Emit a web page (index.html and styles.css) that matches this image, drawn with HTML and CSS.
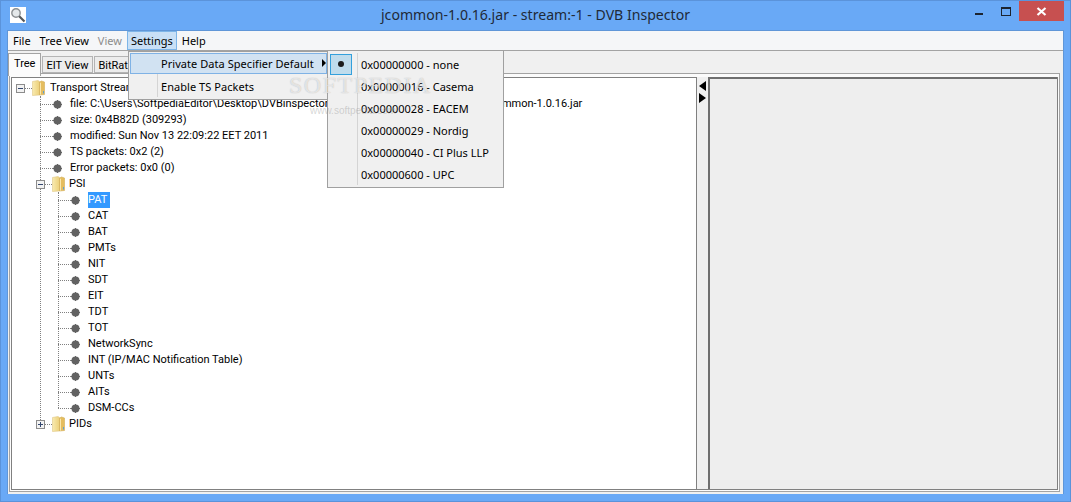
FILE: index.html
```html
<!DOCTYPE html>
<html lang="en">
<head>
<meta charset="utf-8">
<title>jcommon-1.0.16.jar - stream:-1 - DVB Inspector</title>
<link rel="stylesheet" href="styles.css">
</head>
<body>
<svg class="defs" width="0" height="0" aria-hidden="true">
  <defs>
    <linearGradient id="fg" x1="0" y1="0" x2="1" y2="0">
      <stop offset="0" stop-color="#f8eab0"/>
      <stop offset="1" stop-color="#ecd07a"/>
    </linearGradient>
    <symbol id="folder" viewBox="0 0 13 16">
      <path d="M.5 1.5 L6 .5 L7.5 1.5 L7.5 15 L.5 15.5 Z" fill="url(#fg)" stroke="#e0c886" stroke-width=".6"/>
      <path d="M7.5 2 L9.5 1 L12.5 2 L12.5 14.5 L7.5 15 Z" fill="#e5bd5e" stroke="#d2ac55" stroke-width=".6"/>
      <path d="M8.2 3 L9 2.5 L9 14.5 L8.2 14.7 Z" fill="#fff3c4"/>
      <path d="M11 11 h1 v2.5 h-1 z" fill="#5f9fd0"/>
    </symbol>
    <symbol id="bullet" viewBox="0 0 9 9">
      <circle cx="4.5" cy="4.5" r="4" fill="#626262"/>
      <path d="M4.5 0v9M0 4.5h9" stroke="#626262" stroke-width="1"/>
    </symbol>
  </defs>
</svg>
<div class="window">
  <header class="titlebar">
    <div class="title-left">
      <svg class="app-icon" width="16" height="16" viewBox="0 0 16 16">
        <rect width="16" height="16" fill="#fff"/>
        <circle cx="6" cy="6" r="4.2" fill="#e4e8ea" stroke="#8b8f92" stroke-width="1.4"/>
        <path d="M9.2 9.2 L14.5 14.5" stroke="#55585a" stroke-width="2.2"/>
      </svg>
    </div>
    <div class="title-text">jcommon-1.0.16.jar - stream:-1 - DVB Inspector</div>
    <div class="controls">
      <span class="ctl-min"></span>
      <span class="ctl-max"></span>
      <span class="ctl-close">
        <svg width="11" height="9" viewBox="0 0 11 9"><path d="M1.5 1 L9.5 8 M9.5 1 L1.5 8" stroke="#fff" stroke-width="2.2"/></svg>
      </span>
    </div>
  </header>

  <div class="client">
    <nav class="menubar">
      <span class="menu-item">File</span>
      <span class="menu-item">Tree View</span>
      <span class="menu-item disabled">View</span>
      <span class="menu-item open">Settings</span>
      <span class="menu-item">Help</span>
    </nav>

    <div class="tabstrip">
      <span class="tab active">Tree</span>
      <span class="tab">EIT View</span>
      <span class="tab">BitRate View</span>
    </div>

    <section class="tabpane">
      <div class="split">
        <div class="tree">
          <div class="row root">
            <span class="box minus"></span><span class="stub"></span>
            <svg class="folder"><use href="#folder"/></svg>
            <span class="label">Transport Stream</span>
          </div>
          <ul class="branch">
            <li class="row"><span class="elbow"></span><svg class="bullet"><use href="#bullet"/></svg><span class="label">file: C:\Users\SoftpediaEditor\Desktop\DVBinspector-10\DVBinspector\lib\jfreechart\jcommon-1.0.16.jar</span></li>
            <li class="row"><span class="elbow"></span><svg class="bullet"><use href="#bullet"/></svg><span class="label">size: 0x4B82D (309293)</span></li>
            <li class="row"><span class="elbow"></span><svg class="bullet"><use href="#bullet"/></svg><span class="label">modified: Sun Nov 13 22:09:22 EET 2011</span></li>
            <li class="row"><span class="elbow"></span><svg class="bullet"><use href="#bullet"/></svg><span class="label">TS packets: 0x2 (2)</span></li>
            <li class="row"><span class="elbow"></span><svg class="bullet"><use href="#bullet"/></svg><span class="label">Error packets: 0x0 (0)</span></li>
            <li>
              <div class="row node"><span class="box minus"></span><span class="stub"></span><svg class="folder"><use href="#folder"/></svg><span class="label">PSI</span></div>
              <ul class="branch inner">
                <li class="row"><span class="elbow"></span><svg class="bullet"><use href="#bullet"/></svg><span class="label selected">PAT</span></li>
                <li class="row"><span class="elbow"></span><svg class="bullet"><use href="#bullet"/></svg><span class="label">CAT</span></li>
                <li class="row"><span class="elbow"></span><svg class="bullet"><use href="#bullet"/></svg><span class="label">BAT</span></li>
                <li class="row"><span class="elbow"></span><svg class="bullet"><use href="#bullet"/></svg><span class="label">PMTs</span></li>
                <li class="row"><span class="elbow"></span><svg class="bullet"><use href="#bullet"/></svg><span class="label">NIT</span></li>
                <li class="row"><span class="elbow"></span><svg class="bullet"><use href="#bullet"/></svg><span class="label">SDT</span></li>
                <li class="row"><span class="elbow"></span><svg class="bullet"><use href="#bullet"/></svg><span class="label">EIT</span></li>
                <li class="row"><span class="elbow"></span><svg class="bullet"><use href="#bullet"/></svg><span class="label">TDT</span></li>
                <li class="row"><span class="elbow"></span><svg class="bullet"><use href="#bullet"/></svg><span class="label">TOT</span></li>
                <li class="row"><span class="elbow"></span><svg class="bullet"><use href="#bullet"/></svg><span class="label">NetworkSync</span></li>
                <li class="row"><span class="elbow"></span><svg class="bullet"><use href="#bullet"/></svg><span class="label">INT (IP/MAC Notification Table)</span></li>
                <li class="row"><span class="elbow"></span><svg class="bullet"><use href="#bullet"/></svg><span class="label">UNTs</span></li>
                <li class="row"><span class="elbow"></span><svg class="bullet"><use href="#bullet"/></svg><span class="label">AITs</span></li>
                <li class="row"><span class="elbow"></span><svg class="bullet"><use href="#bullet"/></svg><span class="label">DSM-CCs</span></li>
              </ul>
            </li>
            <li class="row node"><span class="box plus"></span><span class="stub"></span><svg class="folder"><use href="#folder"/></svg><span class="label">PIDs</span></li>
          </ul>
        </div>
        <div class="divider">
          <span class="arrow-left"></span>
          <span class="arrow-right"></span>
        </div>
        <div class="detail"></div>
      </div>
    </section>

    <div class="popup settings-menu">
      <div class="popup-item hover"><span class="popup-text">Private Data Specifier Default</span><span class="submenu-arrow"></span></div>
      <div class="popup-item"><span class="popup-text">Enable TS Packets</span></div>
    </div>

    <div class="watermark">
      <div class="wm-big">SOFTPEDIA</div>
      <div class="wm-small">www.softpedia.com</div>
    </div>

    <div class="popup specifier-menu">
      <div class="radio-item"><span class="check"><span class="dot"></span></span><span>0x00000000 - none</span></div>
      <div class="radio-item"><span class="check"></span><span>0x00000016 - Casema</span></div>
      <div class="radio-item"><span class="check"></span><span>0x00000028 - EACEM</span></div>
      <div class="radio-item"><span class="check"></span><span>0x00000029 - Nordig</span></div>
      <div class="radio-item"><span class="check"></span><span>0x00000040 - CI Plus LLP</span></div>
      <div class="radio-item"><span class="check"></span><span>0x00000600 - UPC</span></div>
    </div>
  </div>
</div>
</body>
</html>
```
FILE: styles.css
```css
* { box-sizing: border-box; }
html, body { margin: 0; padding: 0; }
body {
  width: 1071px;
  height: 502px;
  overflow: hidden;
  font-family: "Noto Sans", sans-serif;
  font-size: 11px;
  color: #000;
}
.defs { position: absolute; }
.window {
  width: 1071px;
  height: 502px;
  display: flex;
  flex-direction: column;
  background: #69a9f6;
  border: 1px solid #5b93da;
}
.titlebar {
  height: 29px;
  flex: none;
  display: grid;
  grid-template-columns: 1fr auto 1fr;
  align-items: start;
}
.title-left { padding: 6px 0 0 9px; }
.app-icon { display: block; }
.title-text {
  font-size: 14.1px;
  line-height: 28px;
  color: #1f2a38;
}
.controls {
  display: flex;
  justify-content: flex-end;
  padding-right: 6px;
}
.ctl-min {
  width: 8px;
  height: 2px;
  margin: 12px 18px 0 0;
  background: #1c2430;
}
.ctl-max {
  width: 10px;
  height: 9px;
  margin: 6px 8px 0 0;
  border: 1px solid #1c2430;
  border-top-width: 2px;
}
.ctl-close {
  width: 45px;
  height: 20px;
  background: #c75050;
  display: flex;
  align-items: center;
  justify-content: center;
}
.ctl-close svg { display: block; }

.client {
  position: relative;
  flex: 1;
  margin: 0 6px 7px 6px;
  background: #f0f0f0;
  border: 1px solid #5f96d8;
  border-bottom: 0;
  display: flex;
  flex-direction: column;
  min-height: 0;
}
.menubar {
  height: 20px;
  flex: none;
  display: flex;
  background: #f5f6f8;
  border-bottom: 1px solid #a3a3a3;
  padding-left: 1px;
}
.menu-item {
  padding: 0 3px;
  margin-right: 1px;
  line-height: 18px;
  height: 19px;
  border: 1px solid transparent;
}
.menu-item.disabled { color: #8c8c8c; }
.menu-item.open {
  background: #c9e0f6;
  border-color: #7db5e8;
}
.tabstrip {
  height: 22px;
  flex: none;
  display: flex;
  align-items: flex-start;
  position: relative;
  z-index: 1;
  font-family: Roboto, sans-serif;
}
.tab {
  margin-top: 5px;
  height: 17px;
  padding: 0 4px 0 3px;
  line-height: 17px;
  border: 1px solid #b4b4b4;
  background: #ececec;
  margin-left: 1px;
  white-space: nowrap;
}
.tab.active {
  margin: 2px 0 0 0;
  height: 23px;
  padding: 0 5px;
  line-height: 19px;
  background: #fbfbfb;
  border-color: #a3a3a3;
  border-bottom: 0;
}
.tabpane {
  flex: 1;
  min-height: 0;
  margin: 0 3px 2px 1px;
  padding: 3px 1px 1px 1px;
  background: #fbfbfb;
  border: 1px solid #a3a3a3;
  display: flex;
}
.split {
  flex: 1;
  display: flex;
  min-width: 0;
  background: #f0f0f0;
  border-bottom: 1px solid #808080;
  border-left: 1px solid #808080;
  border-right: 1px solid #808080;
}
.tree {
  width: 685px;
  flex: none;
  background: #fff;
  border-top: 1px solid #808080;
  border-right: 1px solid #808080;
  overflow: hidden;
  padding: 2px 0 0 4px;
  font-family: Roboto, sans-serif;
}
.row {
  height: 16px;
  display: flex;
  align-items: center;
  white-space: nowrap;
  list-style: none;
}
.box {
  width: 9px;
  height: 9px;
  flex: none;
  border: 1px solid #8c8c8c;
  background: #f2f2f2;
  position: relative;
}
.box::before {
  content: "";
  position: absolute;
  left: 1px;
  top: 3px;
  width: 5px;
  height: 1px;
  background: #33476f;
}
.box.plus::after {
  content: "";
  position: absolute;
  left: 3px;
  top: 1px;
  width: 1px;
  height: 5px;
  background: #33476f;
}
.stub {
  width: 7px;
  flex: none;
  border-top: 1px dotted #808080;
}
.folder {
  width: 13px;
  height: 16px;
  flex: none;
  margin-right: 5px;
}
.node .folder { margin-right: 4px; }
.label { line-height: 16px; }
.branch {
  position: relative;
  margin: 0 0 0 24px;
  padding: 0;
  list-style: none;
}
.branch::before {
  content: "";
  position: absolute;
  left: 0;
  top: 0;
  bottom: 8px;
  border-left: 1px dotted #808080;
}
.branch.inner { margin-left: 18px; }
.branch > li { list-style: none; }
.elbow {
  width: 13px;
  flex: none;
  border-top: 1px dotted #808080;
}
.bullet {
  width: 9px;
  height: 9px;
  flex: none;
  margin-right: 8px;
}
.node { margin-left: -4px; position: relative; z-index: 1; }
.selected {
  background: #3399ff;
  color: #fff;
  padding-right: 3px;
}
.divider {
  width: 11px;
  flex: none;
  display: flex;
  flex-direction: column;
  align-items: center;
  gap: 2px;
  padding-top: 4px;
}
.arrow-left {
  width: 0;
  height: 0;
  border-style: solid;
  border-width: 5px 7px 5px 0;
  border-color: transparent #000 transparent transparent;
}
.arrow-right {
  width: 0;
  height: 0;
  border-style: solid;
  border-width: 5.5px 0 5.5px 7px;
  border-color: transparent transparent transparent #000;
}
.detail {
  flex: 1;
  background: #eeeeee;
  border-top: 2px solid #6f6f6f;
  border-left: 2px solid #6f6f6f;
}

.popup {
  position: absolute;
  z-index: 5;
  background: #f0f0f0;
  border: 1px solid #a0a0a0;
}
.settings-menu {
  left: 120px;
  top: 20px;
  width: 201px;
  height: 49px;
  padding: 1px;
}
.settings-menu::before {
  content: "";
  position: absolute;
  left: 28px;
  top: 2px;
  bottom: 2px;
  border-left: 1px solid #d4d4d4;
}
.popup-item {
  height: 21px;
  margin-bottom: 2px;
  display: flex;
  align-items: center;
  padding-left: 30px;
  position: relative;
  border: 1px solid transparent;
  white-space: nowrap;
  letter-spacing: .05px;
}
.popup-item.hover {
  background: #d1e2f2;
  border-color: #7fb2e5;
}
.submenu-arrow {
  position: absolute;
  right: 0;
  top: 5px;
  border-style: solid;
  border-width: 4px 0 4px 4px;
  border-color: transparent transparent transparent #000;
}
.specifier-menu {
  left: 319px;
  top: 19px;
  width: 177px;
  height: 138px;
  padding: 2px;
}
.specifier-menu::before {
  content: "";
  position: absolute;
  left: 29px;
  top: 2px;
  bottom: 2px;
  border-left: 1px solid #d4d4d4;
}
.radio-item {
  height: 22px;
  display: flex;
  align-items: center;
  gap: 9px;
  white-space: nowrap;
}
.check {
  width: 22px;
  height: 21px;
  flex: none;
  display: flex;
  align-items: center;
  justify-content: center;
  border: 1px solid transparent;
}
.check:has(.dot) {
  background: #bfdcec;
  border-color: #33a0dc;
}
.dot {
  width: 6px;
  height: 6px;
  border-radius: 50%;
  background: #1c1c1c;
}
.watermark {
  position: absolute;
  left: 281px;
  top: 41px;
  z-index: 6;
  pointer-events: none;
}
.wm-big {
  font-family: "Liberation Serif", serif;
  font-size: 24px;
  line-height: 26px;
  letter-spacing: 1.5px;
  color: rgba(255, 255, 255, .65);
  text-shadow: 0 0 1px rgba(120, 120, 120, .55);
}
.wm-small {
  font-family: "Liberation Sans", sans-serif;
  font-size: 10px;
  line-height: 12px;
  margin: 7px 0 0 21px;
  color: rgba(150, 150, 150, .4);
}
```
